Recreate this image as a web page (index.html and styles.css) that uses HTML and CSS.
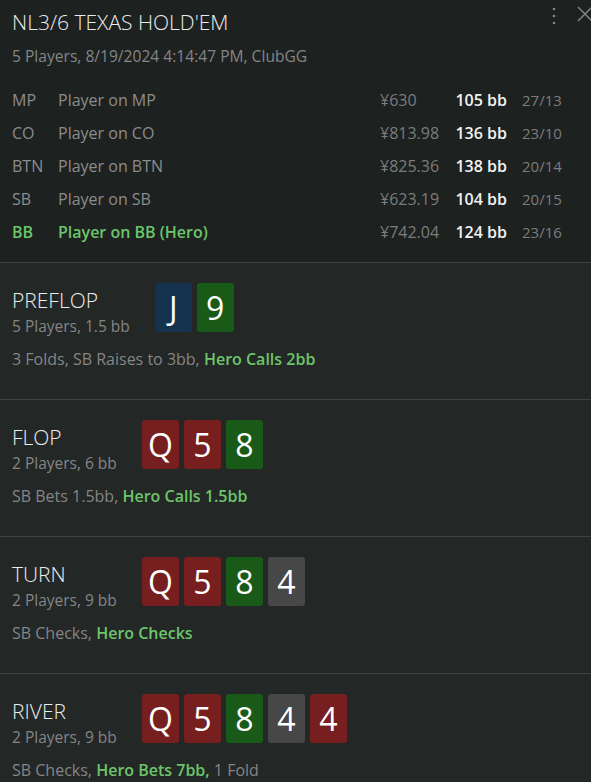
FILE: index.html
```html
<!DOCTYPE html>
<html lang="en">

<head>
    <meta charset="UTF-8" />
    <title>Hand History</title>
    <link rel="stylesheet" href="styles.css">
</head>

<body>
    <div class="hand">
        <header class="hand-head">
            <div class="head-top">
                <h1>NL3/6 TEXAS HOLD'EM</h1>
                <div class="head-icons">
                    <svg class="icon-more" width="6" height="20" viewBox="0 0 6 20">
                        <circle cx="3" cy="3" r="1.3" />
                        <circle cx="3" cy="10" r="1.3" />
                        <circle cx="3" cy="17" r="1.3" />
                    </svg>
                    <svg class="icon-close" width="16" height="16" viewBox="0 0 16 16">
                        <path d="M1 1 L15 15 M15 1 L1 15" />
                    </svg>
                </div>
            </div>
            <p class="meta">5 Players, 8/19/2024 4:14:47 PM, ClubGG</p>

            <div class="seats">
                <div class="seat">
                    <span class="pos">MP</span>
                    <span class="name">Player on MP</span>
                    <span class="money">¥630</span>
                    <span class="stack">105 bb</span>
                    <span class="stats">27/13</span>
                </div>
                <div class="seat">
                    <span class="pos">CO</span>
                    <span class="name">Player on CO</span>
                    <span class="money">¥813.98</span>
                    <span class="stack">136 bb</span>
                    <span class="stats">23/10</span>
                </div>
                <div class="seat">
                    <span class="pos">BTN</span>
                    <span class="name">Player on BTN</span>
                    <span class="money">¥825.36</span>
                    <span class="stack">138 bb</span>
                    <span class="stats">20/14</span>
                </div>
                <div class="seat">
                    <span class="pos">SB</span>
                    <span class="name">Player on SB</span>
                    <span class="money">¥623.19</span>
                    <span class="stack">104 bb</span>
                    <span class="stats">20/15</span>
                </div>
                <div class="seat hero">
                    <span class="pos">BB</span>
                    <span class="name">Player on BB (Hero)</span>
                    <span class="money">¥742.04</span>
                    <span class="stack">124 bb</span>
                    <span class="stats">23/16</span>
                </div>
            </div>
        </header>

        <section class="street">
            <div class="street-row">
                <div class="street-info">
                    <h2>PREFLOP</h2>
                    <p>5 Players, 1.5 bb</p>
                </div>
                <div class="cards">
                    <span class="card blue">J</span>
                    <span class="card green">9</span>
                </div>
            </div>
            <p class="action">3 Folds, SB Raises to 3bb, <b>Hero Calls 2bb</b></p>
        </section>

        <section class="street">
            <div class="street-row">
                <div class="street-info">
                    <h2>FLOP</h2>
                    <p>2 Players, 6 bb</p>
                </div>
                <div class="cards">
                    <span class="card red">Q</span>
                    <span class="card red">5</span>
                    <span class="card green">8</span>
                </div>
            </div>
            <p class="action">SB Bets 1.5bb, <b>Hero Calls 1.5bb</b></p>
        </section>

        <section class="street">
            <div class="street-row">
                <div class="street-info">
                    <h2>TURN</h2>
                    <p>2 Players, 9 bb</p>
                </div>
                <div class="cards">
                    <span class="card red">Q</span>
                    <span class="card red">5</span>
                    <span class="card green">8</span>
                    <span class="card gray">4</span>
                </div>
            </div>
            <p class="action">SB Checks, <b>Hero Checks</b></p>
        </section>

        <section class="street">
            <div class="street-row">
                <div class="street-info">
                    <h2>RIVER</h2>
                    <p>2 Players, 9 bb</p>
                </div>
                <div class="cards">
                    <span class="card red">Q</span>
                    <span class="card red">5</span>
                    <span class="card green">8</span>
                    <span class="card gray">4</span>
                    <span class="card red">4</span>
                </div>
            </div>
            <p class="action">SB Checks, <b>Hero Bets 7bb,</b> 1 Fold</p>
        </section>
    </div>
</body>

</html>
```

FILE: styles.css
```css
html, body {
    margin: 0;
    background-color: #232726;
    overflow: hidden;
}

body {
    font-family: "Open Sans", "Noto Sans", sans-serif;
    color: #e6e6e6;
}

.hand {
    width: 591px;
    overflow: hidden;
}

/* Header */
.hand-head {
    background-color: #1d2120;
    padding: 6px 0 14px 12px;
    border-bottom: 1px solid #3d423f;
}

.head-top {
    display: flex;
    align-items: flex-start;
    margin-right: -2px;
}

.head-top h1 {
    flex: 1;
    margin: 0;
    font-size: 21px;
    font-weight: 300;
    line-height: 32px;
    color: #ececec;
}

.head-icons {
    display: flex;
    align-items: flex-start;
    flex-shrink: 0;
    gap: 20px;
}

.icon-more {
    fill: #8a8a8a;
}

.icon-close {
    stroke: #8a8a8a;
    stroke-width: 1.3;
    fill: none;
}

.meta {
    margin: 7px 0 16px;
    font-size: 15.6px;
    line-height: 22px;
    color: #858585;
}

/* Seats table */
.seat {
    display: grid;
    grid-template-columns: 46px 322px 64px 63px 15px auto;
    height: 33px;
    align-items: center;
    font-size: 16px;
    color: #8c8c8c;
}

.seat .money {
    color: #7c7c7c;
}

.seat .stack {
    grid-column: 4;
    text-align: right;
    font-weight: 600;
    color: #f2f2f2;
}

.seat .stats {
    grid-column: 6;
    font-size: 15px;
    color: #7c7c7c;
}

.seat.hero .pos,
.seat.hero .name {
    font-weight: 600;
    color: #6cc56a;
}

/* Streets */
.street {
    height: 137px;
    box-sizing: border-box;
    padding: 20px 12px 0;
    border-bottom: 1px solid #3d423f;
}

.street-row {
    display: flex;
    align-items: flex-start;
    gap: 25px;
}

.street-info {
    padding-top: 3px;
}

.street-info h2 {
    margin: 0;
    font-size: 21px;
    font-weight: 300;
    line-height: 28px;
    color: #ececec;
}

.street-info p {
    margin: 0;
    font-size: 15.5px;
    line-height: 24px;
    color: #858585;
}

.cards {
    display: flex;
    gap: 5px;
}

.card {
    width: 37px;
    height: 49px;
    border-radius: 3px;
    display: flex;
    align-items: center;
    justify-content: center;
    font-size: 32px;
    color: #ffffff;
}

.card.blue {
    background-color: #15324f;
}

.card.green {
    background-color: #195a18;
}

.card.red {
    background-color: #771e1e;
}

.card.gray {
    background-color: #474747;
}

.action {
    margin: 10px 0 0;
    font-size: 16px;
    line-height: 22px;
    color: #858585;
}

.action b {
    font-weight: 600;
    color: #6cc56a;
}
```
